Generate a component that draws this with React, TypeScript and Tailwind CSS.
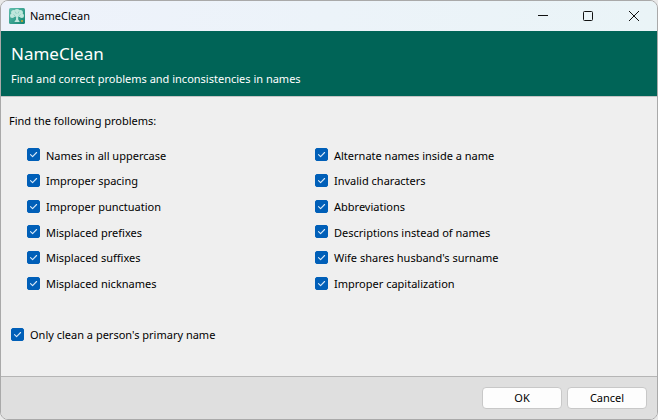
import { useState } from "react";

const problems = [
  "Names in all uppercase",
  "Improper spacing",
  "Improper punctuation",
  "Misplaced prefixes",
  "Misplaced suffixes",
  "Misplaced nicknames",
  "Alternate names inside a name",
  "Invalid characters",
  "Abbreviations",
  "Descriptions instead of names",
  "Wife shares husband's surname",
  "Improper capitalization",
];

interface CheckOptionProps {
  label: string;
  checked: boolean;
  onChange: (checked: boolean) => void;
}

const CheckOption = ({ label, checked, onChange }: CheckOptionProps) => (
  <label className="flex items-center gap-1.5 leading-5">
    <span className="mb-0.5 grid size-[13px] shrink-0">
      <input
        type="checkbox"
        checked={checked}
        onChange={(e) => onChange(e.target.checked)}
        className="peer col-start-1 row-start-1 size-[13px] appearance-none rounded-[2px] border border-[#868686] bg-white checked:border-[#005fb8] checked:bg-[#005fb8]"
      />
      <svg
        viewBox="0 0 13 13"
        className="pointer-events-none col-start-1 row-start-1 hidden size-[13px] peer-checked:block"
        fill="none"
        stroke="#d8e9f8"
        strokeWidth="1.1"
        strokeLinecap="round"
        strokeLinejoin="round"
      >
        <path d="M3.5 6.6 5.6 8.7 9.6 4.5" />
      </svg>
    </span>
    <span>{label}</span>
  </label>
);

const TreeIcon = () => (
  <svg viewBox="0 0 16 16" className="size-4">
    <defs>
      <linearGradient id="tile" x1="0" y1="0" x2="1" y2="1">
        <stop offset="0" stopColor="#62bfae" />
        <stop offset="1" stopColor="#128472" />
      </linearGradient>
    </defs>
    <rect width="16" height="16" rx="1.5" fill="url(#tile)" />
    <g fill="#c0e6dc">
      <circle cx="8" cy="3.8" r="2.8" />
      <circle cx="4.6" cy="4.6" r="2.5" />
      <circle cx="11.4" cy="4.6" r="2.5" />
      <circle cx="3.2" cy="7.8" r="2.2" />
      <circle cx="12.8" cy="7.8" r="2.2" />
      <circle cx="5.8" cy="7.4" r="1.7" />
      <circle cx="10.4" cy="7.4" r="1.7" />
      <path d="M7 6h2.1l.1 5.5 1.6 2.6H5.3L7 11.5z" />
    </g>
    <path d="M4.6 6.4 7.1 9.4M11.4 6.4 9 9.2M6.2 3.6l1.2 2.2M10 3.4 8.9 5.6" stroke="#6fc0b0" strokeWidth=".6" />
    <rect x="12" y="12" width="2" height="2" fill="#a8a23e" />
  </svg>
);

const App = () => {
  const [selected, setSelected] = useState<string[]>(problems);
  const [primaryOnly, setPrimaryOnly] = useState(true);

  const toggle = (name: string, on: boolean) => {
    setSelected(on ? [...selected, name] : selected.filter((n) => n !== name));
  };

  return (
    <div className="min-h-screen bg-[#e9e9e9] font-['Noto_Sans','Open_Sans',sans-serif] text-[11px] text-black">
      <div className="flex min-h-screen flex-col overflow-hidden rounded-lg border border-[#a9a9a9] bg-[#efefef]">
        <header className="flex h-[30px] items-center justify-between bg-linear-to-r from-[#eef2fb] to-[#eaf4f7] pl-2">
          <div className="flex items-center gap-[5px]">
            <TreeIcon />
            <span>NameClean</span>
          </div>
          <div className="flex h-full">
            <button aria-label="Minimize" className="flex w-11 items-center justify-center">
              <svg viewBox="0 0 10 10" className="size-2.5" stroke="#111" fill="none">
                <path d="M0 4.5h10" />
              </svg>
            </button>
            <button aria-label="Maximize" className="flex w-[46px] items-center justify-center">
              <svg viewBox="0 0 10 10" className="size-2.5" stroke="#111" fill="none">
                <rect x=".5" y=".5" width="9" height="9" rx="1" />
              </svg>
            </button>
            <button aria-label="Close" className="flex w-[46px] items-center justify-center">
              <svg viewBox="0 0 10 10" className="size-2.5" stroke="#111" fill="none">
                <path d="M0 0l10 10M10 0 0 10" />
              </svg>
            </button>
          </div>
        </header>

        <div className="border-b border-[#c4c4c4] bg-[#006457] px-2.5 pt-[11px] pb-[9px] text-white">
          <h1 className="text-[17px] leading-6">NameClean</h1>
          <p className="mt-[5px] leading-4">Find and correct problems and inconsistencies in names</p>
        </div>

        <main className="flex-1 px-2 pt-4">
          <p className="leading-4">Find the following problems:</p>
          <div className="mt-3.5 grid h-[154px] grid-flow-col grid-cols-[288px_1fr] grid-rows-6 pl-[18px]">
            {problems.map((name) => (
              <CheckOption
                key={name}
                label={name}
                checked={selected.includes(name)}
                onChange={(on) => toggle(name, on)}
              />
            ))}
          </div>
          <div className="mt-7 pl-0.5">
            <CheckOption
              label="Only clean a person's primary name"
              checked={primaryOnly}
              onChange={setPrimaryOnly}
            />
          </div>
        </main>

        <footer className="flex justify-end gap-[5px] border-t border-[#b5b5b5] bg-[#dfdfdf] px-2.5 py-2.5">
          <button className="h-[22px] w-20 rounded border border-[#c8c8c8] bg-[#fdfdfd]">OK</button>
          <button className="h-[22px] w-20 rounded border border-[#c8c8c8] bg-[#fdfdfd]">Cancel</button>
        </footer>
      </div>
    </div>
  );
};

export default App;
